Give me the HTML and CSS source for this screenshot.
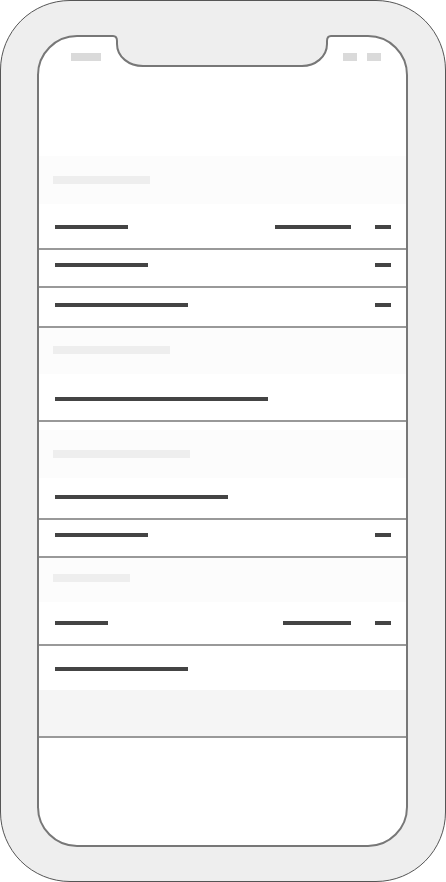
FILE: index.html
```html
<!DOCTYPE html>
<html lang="en">
<head>
    <meta charset="UTF-8">
    <meta name="viewport" content="width=device-width, initial-scale=1.0">
    <title>Settings Wireframe</title>
    <link rel="stylesheet" href="styles.css">
</head>
<body>

    <div class="phone">
        <svg class="notch" width="226" height="38" viewBox="0 0 226 38">
            <path d="M0,0 L0,3 L3,3 Q7,3 7,8 L7,11 C7,24 19,33 33,33 L192,33 C205,33 217,24 217,11 L217,8 Q217,3 221,3 L226,3 L226,0 Z" fill="#eeeeee"/>
            <path d="M0,3 L3,3 Q7,3 7,8 L7,11 C7,24 19,33 33,33 L192,33 C205,33 217,24 217,11 L217,8 Q217,3 221,3 L226,3" fill="none" stroke="#777777" stroke-width="2"/>
        </svg>

        <div class="screen">
            <div class="status-bar">
                <span class="status-time"></span>
                <div class="status-icons">
                    <span class="status-icon"></span>
                    <span class="status-icon"></span>
                </div>
            </div>
            <div class="nav-space"></div>

            <div class="section-header pad-20"><span class="header-bar" style="width: 97px"></span></div>
            <div class="row h44 pad-21">
                <span class="label" style="width: 73px"></span>
                <span class="value" style="width: 76px"></span>
                <span class="chevron"></span>
            </div>
            <div class="row h36 pad-13 divided">
                <span class="label" style="width: 93px"></span>
                <span class="chevron"></span>
            </div>
            <div class="row h38 pad-15 divided">
                <span class="label" style="width: 133px"></span>
                <span class="chevron"></span>
            </div>

            <div class="section-header h46 pad-18 divided"><span class="header-bar" style="width: 117px"></span></div>
            <div class="row h46 pad-23 closed">
                <span class="label" style="width: 213px"></span>
            </div>

            <div class="section-header pad-20 gap-top"><span class="header-bar" style="width: 137px"></span></div>
            <div class="row h40 pad-17">
                <span class="label" style="width: 173px"></span>
            </div>
            <div class="row h36 pad-13 divided">
                <span class="label" style="width: 93px"></span>
                <span class="chevron"></span>
            </div>

            <div class="section-header h44 pad-16 divided"><span class="header-bar" style="width: 77px"></span></div>
            <div class="row h42 pad-19">
                <span class="label" style="width: 53px"></span>
                <span class="value" style="width: 68px"></span>
                <span class="chevron"></span>
            </div>
            <div class="row h44 pad-21 divided">
                <span class="label" style="width: 133px"></span>
            </div>
            <div class="footer-block"></div>
        </div>
    </div>

</body>
</html>
```

FILE: styles.css
```css
body {
    margin: 0;
    padding: 0;
    background-color: #fff;
    font-family: "Liberation Sans", Arial, sans-serif;
}

.phone {
    position: relative;
    width: 446px;
    height: 882px;
    box-sizing: border-box;
    border: 1px solid #555;
    border-radius: 70px;
    background-color: #eee;
    overflow: hidden;
}

.notch {
    position: absolute;
    left: 109px;
    top: 32px;
}

.screen {
    width: 371px;
    height: 812px;
    margin: 34px 0 0 36px;
    box-sizing: border-box;
    border: 2px solid #777;
    border-radius: 40px;
    background-color: #fff;
    overflow: hidden;
}

/* status bar placeholders */
.status-bar {
    display: flex;
    justify-content: space-between;
    padding: 16px 25px 0 32px;
    height: 8px;
}

.status-time {
    width: 30px;
    height: 8px;
    background-color: #dadada;
}

.status-icons {
    display: flex;
    gap: 10px;
}

.status-icon {
    width: 14px;
    height: 8px;
    background-color: #dadada;
}

.nav-space {
    height: 95px;
}

/* sections */
.section-header {
    height: 48px;
    box-sizing: border-box;
    padding-left: 14px;
    background-color: #fcfcfc;
}

.header-bar {
    display: block;
    height: 8px;
    background-color: #eee;
}

.row {
    display: flex;
    align-items: flex-start;
    box-sizing: border-box;
    padding-left: 16px;
    padding-right: 15px;
    background-color: #fff;
}

.label,
.value,
.chevron {
    display: block;
    height: 4px;
    background-color: #444;
}

.value {
    margin-left: auto;
}

.chevron {
    width: 16px;
    margin-left: 24px;
}

.label + .chevron {
    margin-left: auto;
}

.divided {
    border-top: 2px solid #999;
}

.closed {
    border-bottom: 2px solid #999;
}

.gap-top {
    margin-top: 8px;
}

.footer-block {
    height: 46px;
    background-color: #f5f5f5;
    border-bottom: 2px solid #999;
}

/* row heights (border-box, divider included) */
.h36 { height: 36px; }
.h38 { height: 38px; }
.h40 { height: 40px; }
.h42 { height: 42px; }
.h44 { height: 44px; }
.h46 { height: 46px; }

.divided.h36 { height: 38px; }
.divided.h38 { height: 40px; }
.divided.h44 { height: 46px; }
.closed.h46 { height: 48px; }
.section-header.divided.h46 { height: 48px; }
.section-header.divided.h44 { height: 46px; }

.pad-13 { padding-top: 13px; }
.pad-15 { padding-top: 15px; }
.pad-16 { padding-top: 16px; }
.pad-17 { padding-top: 17px; }
.pad-18 { padding-top: 18px; }
.pad-19 { padding-top: 19px; }
.pad-20 { padding-top: 20px; }
.pad-21 { padding-top: 21px; }
.pad-23 { padding-top: 23px; }
```
